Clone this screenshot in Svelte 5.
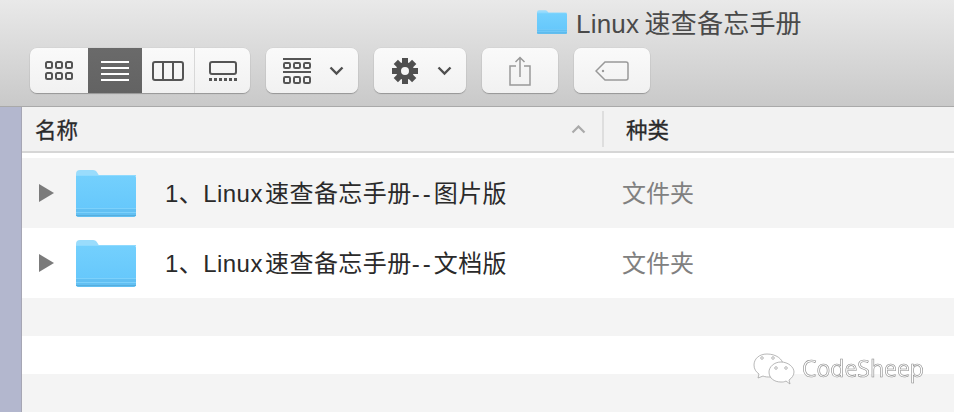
<script lang="ts">
  const ROWS = [
    { head: "1、Linux 速查备忘手册", tail: "图片版", kind: "文件夹" },
    { head: "1、Linux 速查备忘手册", tail: "文档版", kind: "文件夹" },
  ];
  const EMPTY = [0, 1, 2];
</script>

{#snippet folder(w: number, h: number)}
  <svg width={w} height={h} viewBox="0 0 60 47" class="folder">
    <defs>
      <linearGradient id="fbody" x1="0" y1="0" x2="0" y2="1">
        <stop offset="0" stop-color="#74d0fd" />
        <stop offset="1" stop-color="#63c6fb" />
      </linearGradient>
    </defs>
    <path d="M0 4Q0 0 4 0H17Q20 0 21.500 3L23 5.500H0Z" fill="#9adcfc" />
    <path d="M0 5H57Q60 5 60 8V44Q60 47 57 47H3Q0 47 0 44Z" fill="url(#fbody)" />
    <rect x="0" y="5" width="60" height="1" fill="#8fdafe" />
    <path d="M0 38H60V44Q60 47 57 47H3Q0 47 0 44Z" fill="#62c0f3" />
    <rect x="0" y="38" width="60" height="1" fill="#7dd1fb" />
    <rect x="0" y="42" width="60" height="1" fill="#7dd1fb" />
    <path d="M0 45.500H60" stroke="#57aedd" stroke-width="1" />
  </svg>
{/snippet}

{#snippet chevron()}
  <svg width="15" height="10" viewBox="0 0 15 10" class="chev">
    <path d="M1.500 1.500L7.500 7.500L13.500 1.500" fill="none" stroke="#4f4f4f" stroke-width="2.400" />
  </svg>
{/snippet}

<div class="win">
  <header class="toolbar">
    <div class="title">
      {@render folder(30, 24)}
      <span>Linux 速查备忘手册</span>
    </div>
    <div class="tools">
      <div class="btn views">
        <div class="seg s1">
          <svg width="28" height="20" viewBox="0 0 28 20" fill="none" stroke="#555" stroke-width="2">
            <rect x="1" y="1" width="6" height="6" rx="1.500" /><rect x="11" y="1" width="6" height="6" rx="1.500" /><rect x="21" y="1" width="6" height="6" rx="1.500" />
            <rect x="1" y="12" width="6" height="6" rx="1.500" /><rect x="11" y="12" width="6" height="6" rx="1.500" /><rect x="21" y="12" width="6" height="6" rx="1.500" />
          </svg>
        </div>
        <div class="seg s2 on">
          <svg width="28" height="20" viewBox="0 0 28 20" fill="#fff">
            <rect y="0" width="28" height="2" /><rect y="6" width="28" height="2" /><rect y="12" width="28" height="2" /><rect y="18" width="28" height="2" />
          </svg>
        </div>
        <div class="seg s3">
          <svg width="32" height="20" viewBox="0 0 32 20" fill="none" stroke="#555" stroke-width="2">
            <rect x="1" y="1" width="30" height="18" rx="2" /><path d="M11 1V19M21 1V19" />
          </svg>
        </div>
        <div class="seg s4">
          <svg width="28" height="20" viewBox="0 0 28 20" fill="none" stroke="#555" stroke-width="2">
            <rect x="1" y="1" width="26" height="12" rx="2" />
            <path d="M0 18.500H3M5 18.500H8M10 18.500H13M15 18.500H18M20 18.500H23M25 18.500H28" stroke-width="3" />
          </svg>
        </div>
      </div>

      <div class="btn group">
        <svg width="28" height="26" viewBox="0 0 28 26" fill="none" stroke="#555" stroke-width="2">
          <path d="M0 1H28M0 14H28" />
          <rect x="1" y="5" width="6" height="5" rx="1.200" /><rect x="11" y="5" width="6" height="5" rx="1.200" /><rect x="21" y="5" width="6" height="5" rx="1.200" />
          <rect x="1" y="19" width="6" height="6" rx="1.200" /><rect x="11" y="19" width="6" height="6" rx="1.200" /><rect x="21" y="19" width="6" height="6" rx="1.200" />
        </svg>
        {@render chevron()}
      </div>

      <div class="btn action">
        <svg width="28" height="26" viewBox="-14 -13 28 26">
          <g fill="#4f4f4f">
            {#each [0, 45, 90, 135, 180, 225, 270, 315] as a (a)}
              <rect x="-3" y="-13" width="6" height="6" transform="rotate({a})" />
            {/each}
          </g>
          <circle r="6.500" fill="none" stroke="#4f4f4f" stroke-width="5" />
        </svg>
        {@render chevron()}
      </div>

      <div class="btn plain">
        <svg width="22" height="30" viewBox="0 0 22 30" fill="none" stroke="#999" stroke-width="1.500">
          <path d="M7 10H1V29H21V10H15" />
          <path d="M11 21V1.500M6.500 6L11 1.500L15.500 6" />
        </svg>
      </div>

      <div class="btn plain">
        <svg width="34" height="20" viewBox="0 0 34 20" fill="none" stroke="#999" stroke-width="1.500">
          <path d="M10 1H31Q33 1 33 3V17Q33 19 31 19H10L1 10Z" />
          <circle cx="8" cy="10" r="1.200" fill="#999" stroke="none" />
        </svg>
      </div>
    </div>
  </header>

  <div class="body">
    <aside class="side"></aside>
    <main class="list">
      <div class="colhead">
        <span class="c-name">名称</span>
        <svg width="15" height="9" viewBox="0 0 15 9" class="sort">
          <path d="M1.500 7.500L7.500 1.500L13.500 7.500" fill="none" stroke="#aaa" stroke-width="2.200" />
        </svg>
        <span class="divider"></span>
        <span class="c-kind">种类</span>
      </div>
      <div class="gap"></div>
      {#each ROWS as r, i (i)}
        <div class="row" class:alt={i % 2 === 0}>
          <svg width="15" height="18" viewBox="0 0 15 18" class="tri"><path d="M0 0L15 9L0 18Z" fill="#7b7b7b" /></svg>
          {@render folder(60, 47)}
          <span class="name">{r.head}<span class="dash">--</span>{r.tail}</span>
          <span class="kind">{r.kind}</span>
        </div>
      {/each}
      {#each EMPTY as e (e)}
        <div class="blank" class:alt={e % 2 === 0}></div>
      {/each}
    </main>
  </div>

  <div class="mark">
    <svg width="42" height="34" viewBox="0 0 42 34" fill="#fff" stroke="#999" stroke-width="0.700">
      <path d="M14 1C6 1 1 6 1 12C1 16 3 19 6 21L5 25L10 23C12 24 15 24 17 24C24 24 30 19 30 12C30 6 23 1 14 1Z" />
      <path d="M28 9C21 9 16 14 16 19C16 25 21 29 28 29C30 29 31 29 33 28L37 31L36 27C39 25 41 22 41 19C41 14 35 9 28 9Z" />
      <circle cx="9" cy="5" r="1.300" /><circle cx="20" cy="5" r="1.300" />
      <circle cx="23" cy="15" r="1.300" /><circle cx="33" cy="15" r="1.300" />
    </svg>
    <span>CodeSheep</span>
  </div>
</div>

<style>
  :global(body) {
    margin: 0;
    background: #fff;
  }
  .win {
    position: relative;
    width: 954px;
    height: 412px;
    overflow: hidden;
    font-family: "Liberation Sans", "Noto Sans CJK SC", sans-serif;
    color: #2a2a2a;
  }
  .toolbar {
    height: 107px;
    box-sizing: border-box;
    border-bottom: 1px solid #a9a9a9;
    background: linear-gradient(#e9e9e9, #c9c9c9);
    padding-top: 8px;
  }
  .title {
    display: flex;
    align-items: center;
    gap: 9px;
    height: 28px;
    padding-left: 537px;
    font-size: 26px;
    color: #4a4a4a;
    white-space: nowrap;
    word-spacing: -2px;
    letter-spacing: 0.2px;
  }
  .title span {
    margin-top: -2px;
  }
  .tools {
    display: flex;
    gap: 16px;
    padding: 12px 0 0 30px;
  }
  .btn {
    display: flex;
    align-items: center;
    justify-content: center;
    height: 45px;
    box-sizing: border-box;
    border-radius: 7px;
    background: linear-gradient(#fafafa, #f1f1f1);
    box-shadow: 0 1px 1px rgba(0, 0, 0, 0.25), 0 0 0 0.5px rgba(0, 0, 0, 0.06);
  }
  .views {
    width: 220px;
    overflow: hidden;
    justify-content: flex-start;
  }
  .seg {
    display: flex;
    align-items: center;
    justify-content: center;
    height: 100%;
    box-sizing: border-box;
  }
  .s1 {
    width: 58px;
  }
  .s2 {
    width: 54px;
  }
  .s3 {
    width: 53px;
    border-right: 1px solid #d8d8d8;
  }
  .s4 {
    width: 55px;
  }
  .on {
    background: linear-gradient(#6a6a6a, #636363);
  }
  .group {
    width: 92px;
    gap: 18px;
    padding-left: 2px;
  }
  .action {
    width: 92px;
    gap: 18px;
    padding-left: 2px;
  }
  .plain {
    width: 76px;
  }
  .chev {
    flex: none;
  }
  .body {
    display: flex;
    height: 305px;
  }
  .side {
    width: 21px;
    flex: none;
    background: #b3b7ce;
    border-right: 1px solid #a6a6b4;
  }
  .list {
    flex: 1;
    min-width: 0;
  }
  .colhead {
    display: flex;
    align-items: center;
    height: 46px;
    box-sizing: border-box;
    border-bottom: 2px solid #d6d6d6;
    background: #f2f2f2;
    font-size: 21.500px;
  }
  .c-name {
    padding-left: 13px;
    width: 549px;
    flex: none;
    box-sizing: border-box;
    margin-top: -2px;
    -webkit-text-stroke: 0.3px #2a2a2a;
  }
  .sort {
    flex: none;
  }
  .divider {
    width: 2px;
    height: 36px;
    margin-left: 16px;
    background: #dedede;
  }
  .c-kind {
    padding-left: 22px;
    margin-top: -2px;
    -webkit-text-stroke: 0.3px #2a2a2a;
  }
  .gap {
    height: 5px;
  }
  .row {
    display: flex;
    align-items: center;
    height: 70px;
    font-size: 24px;
    white-space: nowrap;
  }
  .tri {
    margin-left: 17px;
    flex: none;
  }
  .folder {
    flex: none;
  }
  .row .folder {
    margin-left: 22px;
  }
  .name {
    width: 457px;
    flex: none;
    margin-left: 29px;
    margin-top: -4px;
    letter-spacing: 0.45px;
    word-spacing: -5px;
  }
  .dash {
    letter-spacing: 3px;
  }
  .kind {
    color: #808080;
    margin-top: -4px;
  }
  .alt {
    background: #f4f4f4;
  }
  .blank {
    height: 38px;
  }
  .mark {
    position: absolute;
    left: 753px;
    top: 353px;
    display: flex;
    align-items: center;
    gap: 7px;
    font-family: "Open Sans", sans-serif;
    font-size: 23px;
    color: #fff;
    -webkit-text-stroke: 0.6px #8a8a8a;
  }
  .mark span {
    margin-top: -5px;
    filter: grayscale(1);
  }
</style>
